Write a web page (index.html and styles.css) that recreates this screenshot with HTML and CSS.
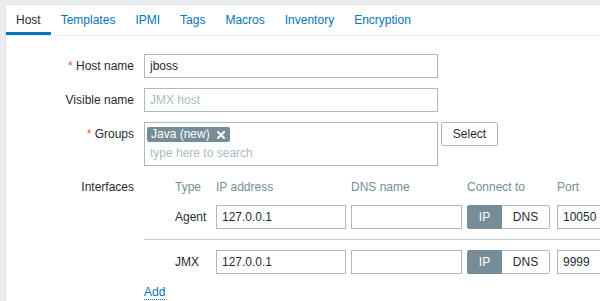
FILE: index.html
```html
<!DOCTYPE html>
<html>
<head>
<meta charset="utf-8">
<link rel="stylesheet" href="styles.css">
</head>
<body>
<div class="page">
  <div class="panel">
    <ul class="tabs">
      <li class="tab active">Host</li>
      <li class="tab">Templates</li>
      <li class="tab">IPMI</li>
      <li class="tab">Tags</li>
      <li class="tab">Macros</li>
      <li class="tab">Inventory</li>
      <li class="tab">Encryption</li>
    </ul>
    <div class="form">
      <div class="label"><span class="req">*</span> Host name</div>
      <div class="field"><input class="text wide" value="jboss"></div>

      <div class="label">Visible name</div>
      <div class="field"><input class="text wide" placeholder="JMX host"></div>

      <div class="label"><span class="req">*</span> Groups</div>
      <div class="field groups">
        <div class="multiselect">
          <div class="chips">
            <span class="chip">Java (new)<svg class="chip-x" width="8" height="8" viewBox="0 0 8 8"><path d="M1 1L7 7M7 1L1 7" stroke="#fff" stroke-width="2" stroke-linecap="square"/></svg></span>
          </div>
          <input class="search" placeholder="type here to search">
        </div>
        <button class="btn">Select</button>
      </div>

      <div class="label label-if">Interfaces</div>
      <div class="field interfaces">
        <div class="if-row if-head">
          <span></span><span>Type</span><span>IP address</span><span>DNS name</span><span>Connect to</span><span>Port</span>
        </div>
        <div class="if-row if-item first">
          <span></span>
          <span class="if-type">Agent</span>
          <input class="text ip" value="127.0.0.1">
          <input class="text dns" value="">
          <div class="toggle"><span class="seg on">IP</span><span class="seg off">DNS</span></div>
          <input class="text port" value="10050">
        </div>
        <div class="if-row if-item">
          <span></span>
          <span class="if-type">JMX</span>
          <input class="text ip" value="127.0.0.1">
          <input class="text dns" value="">
          <div class="toggle"><span class="seg on">IP</span><span class="seg off">DNS</span></div>
          <input class="text port" value="9999">
        </div>
        <div class="add-row"><span class="link">Add</span></div>
      </div>
    </div>
  </div>
</div>
</body>
</html>
```
FILE: styles.css
```css
html, body {
  margin: 0;
  padding: 0;
  overflow: hidden;
  height: 100%;
}
body {
  background: #ebeef0;
  font-family: "Liberation Sans", Arial, sans-serif;
  font-size: 12px;
  color: #1f2c33;
}
.page {
  padding: 4px 0 0 5px;
  height: 100%;
  box-sizing: border-box;
}
.panel {
  background: #fff;
  border-left: 1px solid #dfe4e7;
  border-top: 1px solid #dfe4e7;
  height: 100%;
  overflow: hidden;
}
.tabs {
  list-style: none;
  margin: 0;
  padding: 0;
  display: flex;
  border-bottom: 1px solid #ebeef0;
}
.tab {
  height: 30px;
  line-height: 30px;
  padding: 0 10px;
  color: #0275b8;
  white-space: nowrap;
}
.tab.active {
  color: #1f2c33;
  box-shadow: inset 0 -3px 0 #0275b8;
}
.form {
  display: grid;
  grid-template-columns: 138px 1fr;
  row-gap: 10px;
  padding-top: 18px;
}
.label {
  text-align: right;
  padding-right: 10px;
  line-height: 24px;
  white-space: nowrap;
}
.label-if {
  line-height: 22px;
}
.req {
  color: #e45959;
}
.field {
  display: flex;
  align-items: flex-start;
  min-width: 0;
}
input {
  font: inherit;
  color: #1f2c33;
  outline: none;
}
.text {
  box-sizing: border-box;
  height: 24px;
  border: 1px solid #acbbc2;
  padding: 0 5px;
  margin: 0;
  background: #fff;
}
.text::placeholder,
.search::placeholder {
  color: #acbbc2;
  opacity: 1;
}
.wide {
  width: 294px;
}
.multiselect {
  box-sizing: border-box;
  width: 294px;
  height: 44px;
  border: 1px solid #acbbc2;
  padding: 4px 0 0 2px;
}
.chips {
  display: flex;
  height: 15px;
}
.chip {
  display: inline-flex;
  align-items: center;
  height: 15px;
  line-height: 15px;
  background: #768d99;
  color: #fff;
  border-radius: 2px;
  padding: 0 5px 0 4px;
  white-space: nowrap;
}
.chip-x {
  margin-left: 7px;
}
.search {
  display: block;
  box-sizing: border-box;
  width: 100%;
  height: 22px;
  border: none;
  padding: 0 3px;
  margin: 0;
  background: transparent;
}
.btn {
  font: inherit;
  color: #1f2c33;
  background: #fff;
  border: 1px solid #acbbc2;
  border-radius: 2px;
  height: 24px;
  width: 57px;
  margin-left: 3px;
  padding: 0;
}
.interfaces {
  flex-direction: column;
  align-items: stretch;
}
.if-row {
  display: grid;
  grid-template-columns: 31px 41px 135px 116px 90px 64px;
  align-items: center;
}
.if-head {
  height: 22px;
  line-height: 22px;
  color: #768d99;
  white-space: nowrap;
}
.if-item {
  padding: 10px 0 0;
}
.if-item.first {
  padding: 7px 0 10px;
  border-bottom: 1px solid #c5ced3;
}
.ip { width: 130px; }
.dns { width: 111px; }
.port { width: 64px; }
.toggle {
  display: flex;
  height: 24px;
  width: 83px;
}
.seg {
  box-sizing: border-box;
  height: 24px;
  line-height: 22px;
  text-align: center;
}
.seg.on {
  width: 35px;
  background: #768d99;
  border: 1px solid #768d99;
  color: #fff;
  border-radius: 2px 0 0 2px;
}
.seg.off {
  width: 48px;
  border: 1px solid #acbbc2;
  border-left: none;
  border-radius: 0 2px 2px 0;
  color: #1f2c33;
}
.add-row {
  margin-top: 11px;
  line-height: 14px;
}
.link {
  color: #0275b8;
  border-bottom: 1px dotted #0275b8;
}
```
